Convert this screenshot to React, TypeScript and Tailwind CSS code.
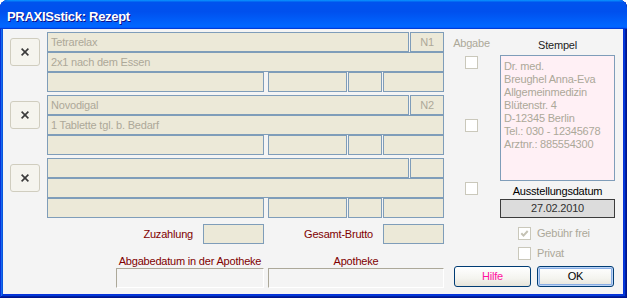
import React from "react";

interface Line {
  name: string;
  size: string;
  dosage: string;
}

const lines: Line[] = [
  { name: "Tetrarelax", size: "N1", dosage: "2x1 nach dem Essen" },
  { name: "Novodigal", size: "N2", dosage: "1 Tablette tgl. b. Bedarf" },
  { name: "", size: "", dosage: "" },
];

const stamp = [
  "Dr. med.",
  "Breughel Anna-Eva",
  "Allgemeinmedizin",
  "Blütenstr. 4",
  "D-12345 Berlin",
  "Tel.: 030 - 12345678",
  "Arztnr.: 885554300",
];

function Field({ className = "", text, center }: { className?: string; text?: string; center?: boolean }) {
  return (
    <div
      className={`h-[20px] shrink-0 overflow-hidden whitespace-nowrap border border-[#7f9db9] bg-[#ece9d8] px-[3px] pt-[1px] text-[11px] leading-[17px] text-[#aca899] ${
        center ? "text-center" : ""
      } ${className}`}
    >
      {text}
    </div>
  );
}

function Checkbox({ checked }: { checked?: boolean }) {
  return (
    <div className="flex h-[13px] w-[13px] shrink-0 items-center justify-center border border-[#cac8bb] bg-white">
      {checked && (
        <svg width="9" height="9" viewBox="0 0 9 9">
          <path d="M1.3 4.3 3.5 6.6 7.7 2" fill="none" stroke="#c4c2b4" strokeWidth="2" />
        </svg>
      )}
    </div>
  );
}

function RemoveButton() {
  return (
    <div className="flex h-[28px] w-[30px] items-center justify-center rounded-[3px] border border-[#d0cdbf] bg-[#f5f4ee]">
      <svg width="8" height="8" viewBox="0 0 8 8">
        <path d="M0.6 0.6 7.4 7.4M7.4 0.6 0.6 7.4" stroke="#3a3a3a" strokeWidth="1.6" />
      </svg>
    </div>
  );
}

function Group({ line, first }: { line: Line; first: boolean }) {
  return (
    <div className="flex h-[60px]">
      {/* remove button */}
      <div className="ml-[7px] w-[30px] pt-[6px]">
        <RemoveButton />
      </div>

      {/* fields */}
      <div className="ml-[7px] flex w-[397px] flex-col">
        <div className="flex gap-px">
          <Field className="w-[362px]" text={line.name} />
          <Field className="w-[34px]" text={line.size} center />
        </div>
        <Field className="w-[397px]" text={line.dosage} />
        <div className="flex">
          <Field className="w-[217px]" />
          <Field className="ml-[4px] w-[79px]" />
          <Field className="ml-px w-[34px]" />
          <Field className="ml-px w-[61px]" />
        </div>
      </div>

      {/* Abgabe */}
      <div className="ml-[5px] flex w-[45px] flex-col items-center">
        <div className="h-[20px] pt-[5px] text-[11px] leading-[13px] text-[#aca899]">{first ? "Abgabe" : ""}</div>
        <div className="flex h-[20px] items-center">
          <Checkbox />
        </div>
      </div>
    </div>
  );
}

function SunkenBox({ className = "" }: { className?: string }) {
  return <div className={`h-[20px] border border-[#aca899] border-b-white border-r-white ${className}`} />;
}

function XpButton({ label, isDefault, textClass }: { label: string; isDefault?: boolean; textClass: string }) {
  return (
    <div
      className={`flex h-[21px] w-[77px] items-center justify-center rounded-[3px] border border-[#003c74] bg-[linear-gradient(180deg,#ffffff,#f4f4ef_60%,#e6e4da)] text-[11px] leading-[13px] ${textClass} ${
        isDefault ? "shadow-[inset_0_0_0_1px_#bcd4f6,inset_0_0_0_2px_#89ade4]" : ""
      }`}
    >
      {label}
    </div>
  );
}

export default function App() {
  return (
    <div className="h-[298px] w-[627px] bg-white font-['Liberation_Sans',Arial,sans-serif]">
      <div className="flex h-full w-full flex-col rounded-t-[8px] bg-[#0831d9] shadow-[inset_-1px_-1px_#00138c,inset_1px_1px_#0831d9,inset_-2px_-2px_#001ea0,inset_2px_2px_#166aee,inset_-3px_-3px_#003bda,inset_3px_3px_#0855dd]">
        {/* title bar */}
        <div className="flex h-[29px] shrink-0 items-center rounded-t-[8px] bg-[linear-gradient(180deg,#0997ff,#0053ee_8%,#0050ee_40%,#0066ff_88%,#0066ff_93%,#005bff_95%,#003dd7_96%,#003dd7)] pl-[7px] pt-[3px]">
          <span className="text-[13px] font-bold leading-[15px] tracking-[-0.3px] text-white [text-shadow:1px_1px_#0f1089]">
            PRAXISstick: Rezept
          </span>
        </div>

        {/* client area */}
        <div className="mb-[4px] ml-[3px] mr-[4px] flex flex-1 flex-col bg-[#f4f4f4] tracking-[-0.2px]">
          <div className="flex pt-[3px]">
            <div className="flex flex-col gap-[3px]">
              {lines.map((line, i) => (
                <Group key={i} line={line} first={i === 0} />
              ))}
            </div>

            <div className="ml-[6px] flex w-[115px] flex-col">
              <div className="h-[23px] pt-[7px] text-center text-[11px] leading-[13px] text-[#1e1e1e]">Stempel</div>
              <div className="h-[126px] border border-[#7f9db9] bg-[#fff0f5] px-[3px] pt-[4px] text-[11px] leading-[13px] text-[#aca899]">
                {stamp.map((s) => (
                  <div key={s} className="whitespace-nowrap">
                    {s}
                  </div>
                ))}
              </div>
              <div className="h-[18px] pt-[4px] text-center text-[11px] leading-[13px] text-black">Ausstellungsdatum</div>
              <div className="h-[19px] border border-[#3c3c3c] bg-[#dcdcdc] text-center text-[11px] leading-[17px] text-[#303030]">
                27.02.2010
              </div>
            </div>
          </div>

          <div className="flex">
            <div className="ml-[44px] flex w-[397px] flex-col">
              <div className="mt-[6px] flex h-[20px]">
                <div className="flex w-[217px] items-center justify-end gap-[10px]">
                  <span className="text-[11px] leading-[13px] text-[#800000]">Zuzahlung</span>
                  <div className="h-[20px] w-[61px] border border-[#7f9db9] bg-[#ece9d8]" />
                </div>
                <div className="ml-[4px] flex w-[176px] items-center justify-end gap-[10px]">
                  <span className="text-[11px] leading-[13px] text-[#800000]">Gesamt-Brutto</span>
                  <div className="h-[20px] w-[61px] border border-[#7f9db9] bg-[#ece9d8]" />
                </div>
              </div>
              <div className="flex">
                <div className="flex w-[217px] justify-end">
                  <div className="flex w-[148px] flex-col">
                    <div className="h-[24px] whitespace-nowrap pt-[11px] text-center text-[11px] leading-[13px] text-[#800000]">
                      Abgabedatum in der Apotheke
                    </div>
                    <SunkenBox />
                  </div>
                </div>
                <div className="ml-[4px] flex w-[176px] flex-col">
                  <div className="h-[24px] pt-[11px] text-center text-[11px] leading-[13px] text-[#800000]">Apotheke</div>
                  <SunkenBox />
                </div>
              </div>
            </div>

            <div className="flex flex-col pl-[10px]">
              <div className="ml-[64px] mt-[9px] flex h-[13px] items-center gap-[6px]">
                <Checkbox checked />
                <span className="text-[11px] leading-[13px] text-[#aca899]">Gebühr frei</span>
              </div>
              <div className="ml-[64px] mt-[7px] flex h-[13px] items-center gap-[6px]">
                <Checkbox />
                <span className="text-[11px] leading-[13px] text-[#aca899]">Privat</span>
              </div>
              <div className="mt-[6px] flex gap-[6px]">
                <XpButton label="Hilfe" textClass="text-[#ff10a0]" />
                <XpButton label="OK" isDefault textClass="text-black" />
              </div>
            </div>
          </div>
        </div>
      </div>
    </div>
  );
}
